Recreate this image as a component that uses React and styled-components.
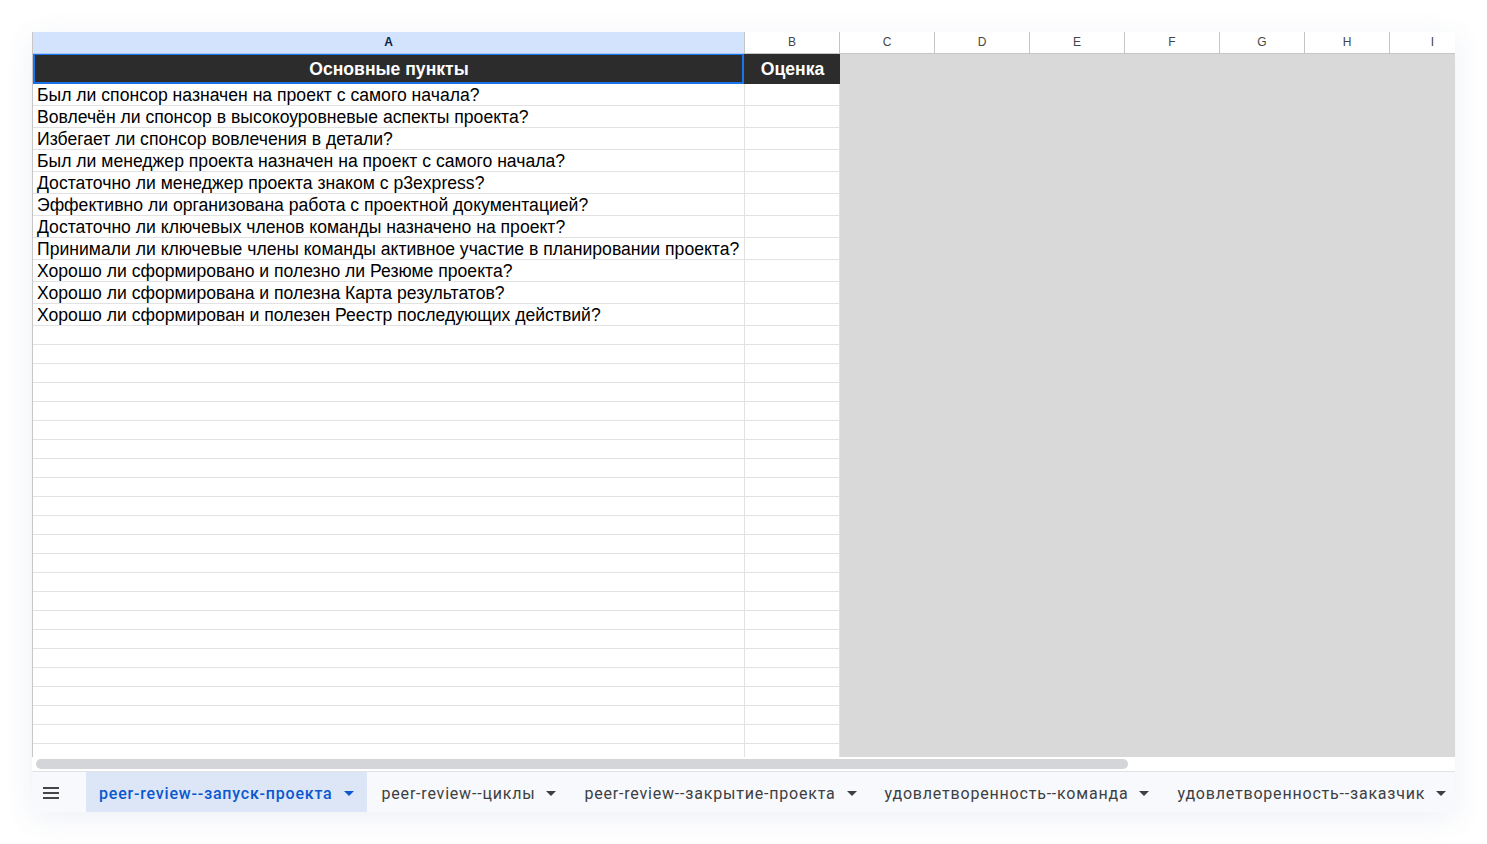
import styled, { createGlobalStyle } from "styled-components";

const GlobalStyle = createGlobalStyle`
  html, body {
    margin: 0;
    padding: 0;
    background: #ffffff;
  }
  * { box-sizing: border-box; }
`;

const questions = [
  "Был ли спонсор назначен на проект с самого начала?",
  "Вовлечён ли спонсор в высокоуровневые аспекты проекта?",
  "Избегает ли спонсор вовлечения в детали?",
  "Был ли менеджер проекта назначен на проект с самого начала?",
  "Достаточно ли менеджер проекта знаком с p3express?",
  "Эффективно ли организована работа с проектной документацией?",
  "Достаточно ли ключевых членов команды назначено на проект?",
  "Принимали ли ключевые члены команды активное участие в планировании проекта?",
  "Хорошо ли сформировано и полезно ли Резюме проекта?",
  "Хорошо ли сформирована и полезна Карта результатов?",
  "Хорошо ли сформирован и полезен Реестр последующих действий?",
];

const columns = [
  { name: "A", width: 712, active: true },
  { name: "B", width: 95 },
  { name: "C", width: 95 },
  { name: "D", width: 95 },
  { name: "E", width: 95 },
  { name: "F", width: 95 },
  { name: "G", width: 85 },
  { name: "H", width: 85 },
  { name: "I", width: 86 },
];

const tabs = [
  { title: "peer-review--запуск-проекта", active: true },
  { title: "peer-review--циклы" },
  { title: "peer-review--закрытие-проекта" },
  { title: "удовлетворенность--команда" },
  { title: "удовлетворенность--заказчик" },
];

const Page = styled.div`
  padding: 32px;
  height: 844px;
`;

const Window = styled.div`
  width: 1423px;
  height: 780px;
  display: flex;
  flex-direction: column;
  background: #fff;
  overflow: hidden;
  box-shadow: 0 6px 28px rgba(70, 90, 160, 0.09);
`;

const HeaderRow = styled.div`
  display: flex;
  height: 22px;
  border-left: 1px solid #c7c7c7;
  border-bottom: 1px solid #c4c7c5;
`;

const ColHead = styled.div`
  flex: 0 0 ${(p) => p.$w}px;
  display: flex;
  align-items: center;
  justify-content: center;
  font-family: "Liberation Sans", Arial, sans-serif;
  font-size: 12px;
  color: ${(p) => (p.$active ? "#0b1f4a" : "#444746")};
  font-weight: ${(p) => (p.$active ? 700 : 400)};
  background: ${(p) => (p.$active ? "#d3e3fd" : "#ffffff")};
  border-right: 1px solid #c4c7c5;
  border-bottom: ${(p) => (p.$active ? "1px solid #a8c7fa" : "none")};
  margin-bottom: ${(p) => (p.$active ? "-1px" : "0")};
  padding-bottom: 2px;
`;

const Grid = styled.div`
  display: flex;
  height: 703px;
  overflow: hidden;
  border-left: 1px solid #c7c7c7;
`;

const Table = styled.div`
  flex: 0 0 807px;
  display: flex;
  flex-direction: column;
`;

const Blank = styled.div`
  flex: 1;
  background: #d9d9d9;
`;

const Row = styled.div`
  display: flex;
  flex: 0 0 ${(p) => p.$h}px;
  background: ${(p) => (p.$dark ? "#2c2c2c" : "#ffffff")};
  border-bottom: ${(p) => (p.$dark ? "none" : "1px solid #e2e2e2")};
`;

const Cell = styled.div`
  flex: 0 0 ${(p) => p.$w}px;
  display: flex;
  align-items: ${(p) => (p.$head ? "center" : "flex-end")};
  justify-content: ${(p) => (p.$head ? "center" : "flex-start")};
  padding: 0 3px 0 4px;
  white-space: nowrap;
  overflow: visible;
  line-height: 20px;
  font-family: "Liberation Sans", Arial, sans-serif;
  font-size: 17.6px;
  font-weight: ${(p) => (p.$head ? 700 : 400)};
  color: ${(p) => (p.$head ? "#ffffff" : "#000000")};
  border-right: 1px solid ${(p) => (p.$head ? "#2c2c2c" : "#e2e2e2")};
  box-shadow: ${(p) => (p.$selected ? "inset 0 0 0 2px #1a73e8" : "none")};
  margin-top: ${(p) => (p.$selected ? "-1px" : "0")};
  height: ${(p) => (p.$selected ? "calc(100% + 1px)" : "auto")};
`;

const ScrollArea = styled.div`
  height: 15px;
  padding: 2px 0 0 4px;
  border-bottom: 1px solid #e1e3e6;
  background: #fff;
`;

const Thumb = styled.div`
  width: 1092px;
  height: 10px;
  border-radius: 5px;
  background: #d4d5d9;
`;

const TabBar = styled.div`
  flex: 1;
  display: flex;
  align-items: stretch;
  background: #f8f9fc;
  max-height: 40px;
`;

const MenuButton = styled.div`
  flex: 0 0 54px;
  display: flex;
  align-items: center;
  padding: 1px 0 0 11px;
`;

const Burger = styled.div`
  width: 16px;
  display: flex;
  flex-direction: column;
  gap: 3px;
  span {
    display: block;
    height: 2px;
    background: #444746;
  }
`;

const Tab = styled.div`
  display: flex;
  align-items: center;
  gap: 11px;
  padding: 2px 13px 0 13px;
  margin-right: 2px;
  background: ${(p) => (p.$active ? "#dce6f6" : "transparent")};
  color: ${(p) => (p.$active ? "#0b57d0" : "#3c4043")};
  font-family: Roboto, "Noto Sans", sans-serif;
  font-size: 16px;
  font-weight: ${(p) => (p.$active ? 500 : 400)};
  letter-spacing: 0.8px;
  white-space: nowrap;
`;

const Caret = styled.span`
  width: 0;
  height: 0;
  border-left: 5px solid transparent;
  border-right: 5px solid transparent;
  border-top: 5px solid currentColor;
  margin-top: 1px;
`;

const App = () => {
  const emptyRows = Array.from({ length: 24 });
  return (
    <>
      <GlobalStyle />
      <Page>
        <Window>
          <HeaderRow>
            {columns.map((c) => (
              <ColHead key={c.name} $w={c.width} $active={c.active}>
                {c.name}
              </ColHead>
            ))}
          </HeaderRow>
          <Grid>
            <Table>
              <Row $h={30} $dark>
                <Cell $w={712} $head $selected>
                  Основные пункты
                </Cell>
                <Cell $w={95} $head>
                  Оценка
                </Cell>
              </Row>
              {questions.map((q) => (
                <Row key={q} $h={22}>
                  <Cell $w={712}>{q}</Cell>
                  <Cell $w={95} />
                </Row>
              ))}
              {emptyRows.map((_, i) => (
                <Row key={i} $h={19}>
                  <Cell $w={712} />
                  <Cell $w={95} />
                </Row>
              ))}
            </Table>
            <Blank />
          </Grid>
          <ScrollArea>
            <Thumb />
          </ScrollArea>
          <TabBar>
            <MenuButton>
              <Burger>
                <span />
                <span />
                <span />
              </Burger>
            </MenuButton>
            {tabs.map((t) => (
              <Tab key={t.title} $active={t.active}>
                {t.title}
                <Caret />
              </Tab>
            ))}
          </TabBar>
        </Window>
      </Page>
    </>
  );
};

export default App;
